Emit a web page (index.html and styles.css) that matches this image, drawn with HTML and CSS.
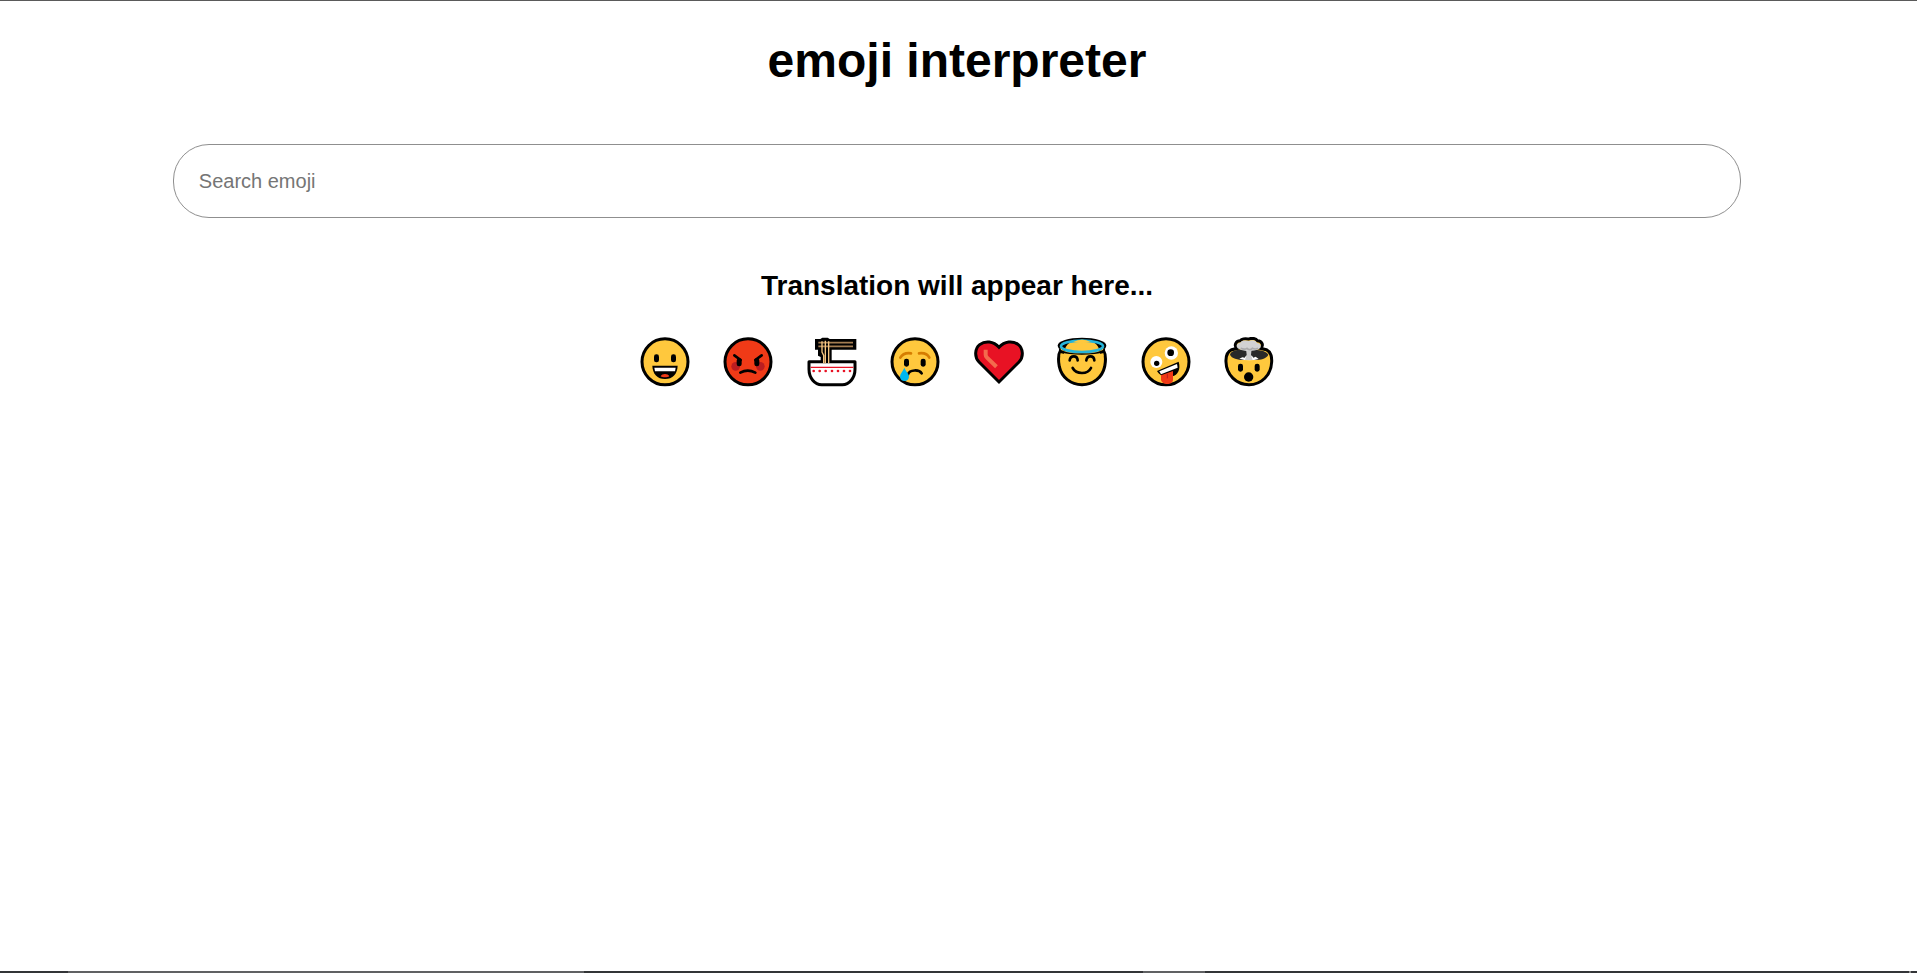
FILE: index.html
```html
<!DOCTYPE html>
<html lang="en">
<head>
<meta charset="utf-8">
<title>emoji interpreter</title>
<link rel="stylesheet" href="styles.css">
</head>
<body>
<main class="app">
  <h1 class="title">emoji interpreter</h1>
  <input class="search" type="text" placeholder="Search emoji" aria-label="Search emoji">
  <h2 class="output">Translation will appear here...</h2>
  <div class="emoji-list">
    <button class="emoji" type="button" aria-label="Grinning face">
      <svg viewBox="25 27 150 150">
        <circle cx="100" cy="101.500" r="69" fill="#ffc83d" stroke="#000" stroke-width="9"/>
        <rect x="67" y="79" width="15" height="24" rx="7"/><rect x="118" y="79" width="15" height="24" rx="7"/>
        <path d="M62 113H138C137 138 123 153 100 153S63 138 62 113Z"/>
        <path d="M68 119H132L130 130H70Z" fill="#fff"/>
        <path d="M87 145C91 136 109 136 113 145C107 149 93 149 87 145Z" fill="#f03a17"/>
      </svg>
    </button>
    <button class="emoji" type="button" aria-label="Angry face">
      <svg viewBox="275 27 150 150">
        <circle cx="350" cy="101.500" r="69" fill="#f03a17" stroke="#000" stroke-width="9"/>
        <circle cx="313" cy="115" r="13" fill="#bb1d20"/><circle cx="387" cy="115" r="13" fill="#bb1d20"/>
        <rect x="316" y="91" width="15" height="24" rx="7"/><rect x="369" y="91" width="15" height="24" rx="7"/>
        <path d="M309 82L328 96M391 82L372 96M327 134Q349 122 372 134" fill="none" stroke="#000" stroke-width="8" stroke-linecap="round"/>
      </svg>
    </button>
    <button class="emoji" type="button" aria-label="Steaming bowl">
      <svg viewBox="28 27 150 150">
        <path d="M34 101H172V124C172 150 155 170 134 170H72C51 170 34 150 34 124Z" fill="#fff" stroke="#000" stroke-width="9" stroke-linejoin="round"/>
        <path d="M52 33H68L74 29H90L96 33H176V65H102V100H69V87L61 83V65H52Z"/>
        <path d="M62 44H166M62 55H166" stroke="#a47d52" stroke-width="5"/>
        <path d="M73 40V72L78 82V106M83 38V106M93 40V106" fill="none" stroke="#f5c681" stroke-width="4"/>
        <path d="M39 118H167" stroke="#e81224" stroke-width="4"/>
        <g fill="#e81224"><circle cx="48" cy="129" r="4"/><circle cx="66" cy="129" r="4"/><circle cx="84" cy="129" r="4"/><circle cx="103" cy="129" r="4"/><circle cx="121" cy="129" r="4"/><circle cx="139" cy="129" r="4"/><circle cx="157" cy="129" r="4"/></g>
      </svg>
    </button>
    <button class="emoji" type="button" aria-label="Crying face">
      <svg viewBox="278 27 150 150">
        <circle cx="353" cy="101.500" r="69" fill="#ffc83d" stroke="#000" stroke-width="9"/>
        <path d="M309 89Q318 73 341 76M396 89Q388 73 365 76" fill="none" stroke="#d67d00" stroke-width="8" stroke-linecap="round"/>
        <rect x="320" y="92" width="15" height="24" rx="7"/><rect x="370" y="92" width="15" height="24" rx="7"/>
        <path d="M332 139C337 124 366 124 373 136" fill="none" stroke="#000" stroke-width="8" stroke-linecap="round"/>
        <path d="M321 119C317 129 308 137 308 146C308 163 335 163 335 146C335 137 325 130 321 119Z" fill="#00b7f0"/>
      </svg>
    </button>
    <button class="emoji" type="button" aria-label="Red heart">
      <svg viewBox="29 27 150 150">
        <path d="M104 162L44 102C29 87 32 61 46 50C63 37 87 39 104 58C121 39 145 37 162 50C176 61 179 87 164 102Z" fill="#e81224" stroke="#000" stroke-width="9"/>
        <path d="M64 71V80Q64 85 68 89L92 112" fill="none" stroke="#f36b4d" stroke-width="12" stroke-linecap="square"/>
      </svg>
    </button>
    <button class="emoji" type="button" aria-label="Smiling face with halo">
      <svg viewBox="279 27 150 150">
        <path d="M290 66C279 85 284 102 286 116C293 148 320 170 354 170C388 170 415 148 422 116C424 102 429 85 418 66Z" fill="#ffc83d" stroke="#000" stroke-width="9"/>
        <ellipse cx="354" cy="53" rx="73" ry="24"/>
        <path d="M304 60C309 44 332 35 354 35S399 44 404 60V74H304Z" fill="#ffc83d"/>
        <path d="M290 57C300 86 408 86 418 57V84H290Z" fill="#ffc83d"/>
        <path d="M284 57C290 84 418 84 424 57L422 74C396 82 312 82 286 74Z"/>
        <path d="M300 76Q354 86 408 76V90H300Z" fill="#ffc83d"/>
        <ellipse cx="354" cy="55" rx="63" ry="17" fill="none" stroke="#26b5da" stroke-width="8"/>
        <path d="M328 42Q354 28 380 42Q354 49 328 42Z" fill="#ffc83d"/>
        <path d="M317 97C319 81 340 81 341 97M367 97C369 81 390 81 391 97M326 120C337 140 371 140 381 120" fill="none" stroke="#000" stroke-width="8" stroke-linecap="round"/>
      </svg>
    </button>
    <button class="emoji" type="button" aria-label="Zany face">
      <svg viewBox="32 27 150 150">
        <circle cx="107" cy="101.500" r="69" fill="#ffc83d" stroke="#000" stroke-width="9"/>
        <circle cx="123" cy="75" r="20" fill="#fff"/><circle cx="121" cy="74" r="10"/>
        <circle cx="78" cy="102" r="18" fill="#fff"/><circle cx="79" cy="106" r="8"/>
        <path d="M80 129L145 101C152 124 142 142 126 145C108 152 88 144 80 129Z"/>
        <path d="M87 130L140 108L142 119L92 139Z" fill="#fff"/>
        <path d="M92 142L128 129V155C128 172 94 172 92 155Z" fill="#f03a17"/><path d="M111 137V151" stroke="#ba1d20" stroke-width="3"/>
      </svg>
    </button>
    <button class="emoji" type="button" aria-label="Exploding head">
      <svg viewBox="282 27 150 150">
        <path d="M322 61C311 55 316 38 331 38C337 29 352 33 357 33C366 29 378 32 382 38C397 38 402 54 391 61L409 65C422 72 426 86 425 102C424 141 394 170 357 170C319 170 289 140 288 102C287 86 290 72 305 65Z" fill="#ffc83d" stroke="#000" stroke-width="9"/>
        <path d="M300 80C305 64 333 64 356 67C380 64 407 66 415 80C407 96 380 98 356 95C333 98 306 94 300 80Z" fill="#292929"/>
        <path d="M328 92L337 88L344 89L348 83H366L370 89L377 86L386 93Q357 101 328 92Z" fill="#fff"/>
        <path d="M348 62H365L363 80L368 96H345L350 80Z" fill="#ccc"/>
        <path d="M328 63C316 59 318 45 331 44C335 36 350 37 357 39C366 35 378 37 381 45C394 46 397 59 385 64C371 71 341 71 328 63Z" fill="#d2d2d2"/>
        <path d="M332 61Q344 66 351 61Q359 69 367 61Q376 65 384 61" fill="none" stroke="#aaa" stroke-width="5"/>
        <rect x="324" y="107" width="15" height="24" rx="7"/><rect x="374" y="107" width="15" height="24" rx="7"/>
        <circle cx="356" cy="147" r="14"/>
      </svg>
    </button>
  </div>
</main>
<div class="bottom-edge"><i class="seg seg-a"></i><i class="seg seg-b"></i><i class="seg seg-c"></i></div>
</body>
</html>
```
FILE: styles.css
```css
* {
  box-sizing: border-box;
}

body {
  margin: 0;
  min-height: 100vh;
  display: flex;
  flex-direction: column;
  border-top: 1px solid #5a5a5a;
  background: #fff;
  color: #000;
  font-family: Arial, "Liberation Sans", sans-serif;
}

.app {
  flex: 1;
  display: flex;
  flex-direction: column;
  align-items: center;
  padding: 32px 11px 32px 8px;
}

.title {
  margin: 0;
  font-size: 48px;
  line-height: 55px;
}

.search {
  width: calc(80% + 50px);
  margin: 56px 0 52px;
  padding: 24px 25px;
  border: 1px solid #8f8f8f;
  border-radius: 36px;
  background: #fff;
  font-family: inherit;
  font-size: 20px;
  line-height: 24px;
  height: 74px;
}

.search::placeholder {
  color: #757575;
}

.output {
  margin: 0 0 35px;
  font-size: 28px;
  line-height: 32px;
}

.emoji-list {
  display: flex;
  justify-content: space-between;
  width: 634px;
  max-width: 100%;
}

.emoji {
  padding: 0;
  border: 0;
  background: none;
  cursor: pointer;
}

.emoji svg {
  display: block;
  width: 50px;
  height: 50px;
}

.bottom-edge {
  display: grid;
  grid-template-columns: 68fr 516fr 559fr 62fr 704fr 2fr 6fr;
  height: 2px;
  background: #333537;
}

.seg {
  background: #606163;
}

.seg-a {
  grid-column: 2;
}

.seg-b {
  grid-column: 4;
}

.seg-c {
  grid-column: 6;
  background: #8c8c8c;
}
```
